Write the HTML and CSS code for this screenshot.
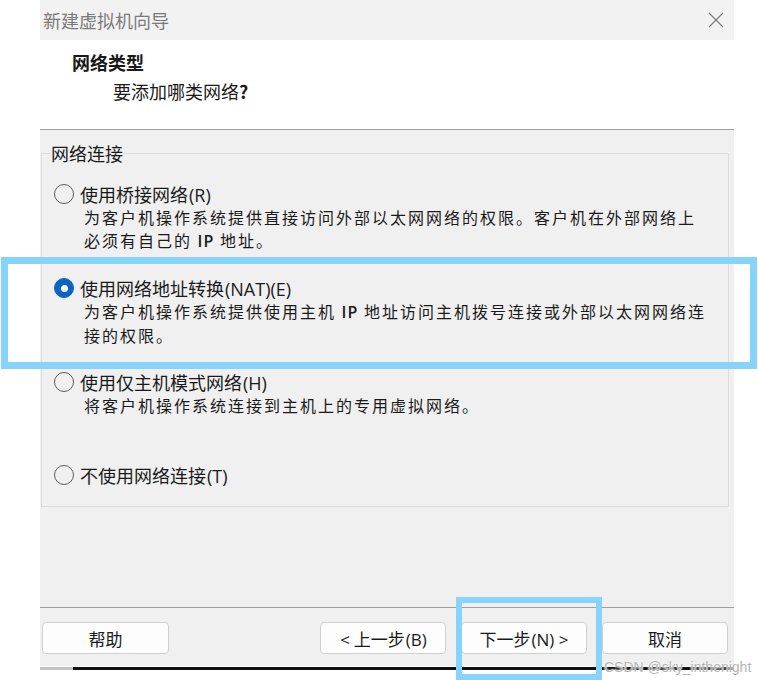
FILE: index.html
```html
<!DOCTYPE html>
<html lang="zh-CN">
<head>
    <meta charset="UTF-8">
    <meta name="viewport" content="width=device-width, initial-scale=1.0">
    <title>新建虚拟机向导</title>
    <link rel="stylesheet" href="styles.css">
</head>
<body>
    <div class="dialog">
        <div class="titlebar">
            <span class="title">新建虚拟机向导</span>
            <svg class="close" width="16" height="16" viewBox="0 0 16 16">
                <path d="M1 1 L15 15 M15 1 L1 15" stroke="#7a7a7a" stroke-width="1.1" fill="none"/>
            </svg>
        </div>

        <div class="header">
            <h1>网络类型</h1>
            <p>要添加哪类网络<b>?</b></p>
        </div>

        <div class="content">
            <fieldset class="group">
                <legend>网络连接</legend>

                <div class="option">
                    <label class="option-label"><span class="radio"></span><span>使用桥接网络<span class="key">(R)</span></span></label>
                    <div class="option-desc">为客户机操作系统提供直接访问外部以太网网络的权限。客户机在外部网络上<br>必须有自己的 <b>IP</b> 地址。</div>
                </div>

                <div class="option">
                    <label class="option-label"><span class="radio checked"></span><span>使用网络地址转换<span class="key">(NAT)(E)</span></span></label>
                    <div class="option-desc">为客户机操作系统提供使用主机 <b>IP</b> 地址访问主机拨号连接或外部以太网网络连<br>接的权限。</div>
                </div>

                <div class="option">
                    <label class="option-label"><span class="radio"></span><span>使用仅主机模式网络<span class="key">(H)</span></span></label>
                    <div class="option-desc">将客户机操作系统连接到主机上的专用虚拟网络。</div>
                </div>

                <div class="option">
                    <label class="option-label"><span class="radio"></span><span>不使用网络连接<span class="key">(T)</span></span></label>
                </div>
            </fieldset>
        </div>

        <div class="footer">
            <button class="btn">帮助</button>
            <div class="nav-buttons">
                <button class="btn"><span class="key">&lt;</span> 上一步<span class="key">(B)</span></button>
                <button class="btn">下一步<span class="key">(N) &gt;</span></button>
                <button class="btn">取消</button>
            </div>
        </div>
    </div>
    <div class="taskline"></div>

    <!-- 标注框 -->
    <div class="mark mark-nat"></div>
    <div class="mark mark-next"></div>
    <div class="watermark">CSDN @sky_inthenight</div>
</body>
</html>
```

FILE: styles.css
```css
body {
    margin: 0;
    background-color: #fff;
    font-family: "Noto Sans CJK SC", sans-serif;
    color: #1a1a1a;
}
.dialog {
    width: 694px;
    margin-left: 40px;
}
.titlebar {
    height: 40px;
    box-sizing: border-box;
    background-color: #f2f2f2;
    display: flex;
    align-items: center;
    justify-content: space-between;
    padding: 0 10px 0 3px;
}
.title {
    font-size: 18px;
    line-height: 24px;
    color: #7a7a7a;
}
.header {
    height: 90px;
    box-sizing: border-box;
    background-color: #fff;
    border-bottom: 1px solid #a0a0a0;
    padding: 10px 0 0 32px;
}
.header h1 {
    margin: 0;
    font-size: 18px;
    line-height: 24px;
    font-weight: bold;
}
.header p {
    margin: 5px 0 0 41px;
    font-size: 18px;
    line-height: 24px;
}
.content {
    height: 478px;
    box-sizing: border-box;
    background-color: #f0f0f0;
    border-bottom: 1px solid #a0a0a0;
    padding-top: 13px;
}
.group {
    margin: 0 5px 0 1px;
    padding: 19px 12px 19px;
    border: 1px solid #dcdcdc;
}
.group legend {
    font-size: 18px;
    line-height: 20px;
    padding: 0 1px;
    margin-left: -4px;
}
.option + .option {
    margin-top: 23px;
}
.option-label {
    display: flex;
    align-items: center;
    gap: 6px;
    height: 24px;
    font-size: 18px;
    line-height: 24px;
}
.key {
    font-family: "Open Sans", sans-serif;
    font-weight: 500;
    line-height: 1;
    margin-left: 1px;
}
.radio {
    width: 18px;
    height: 18px;
    border: 1px solid #5c5c5c;
    border-radius: 50%;
    display: flex;
    align-items: center;
    justify-content: center;
}
.radio.checked {
    background-color: #0a64c2;
    border-color: #0a64c2;
}
.radio.checked::after {
    content: '';
    width: 7px;
    height: 7px;
    border-radius: 50%;
    background-color: #fff;
}
.option-desc {
    min-height: 46px;
    padding-left: 30px;
    font-size: 16px;
    line-height: 23px;
    letter-spacing: 2px;
}
.option-desc b {
    font-family: "Open Sans", sans-serif;
    font-weight: 600;
    letter-spacing: 1px;
}
.footer {
    height: 58px;
    box-sizing: border-box;
    background-color: #f0f0f0;
    display: flex;
    align-items: flex-start;
    padding: 14px 6px 0 2px;
}
.btn {
    width: 127px;
    height: 32px;
    padding: 0;
    background-color: #fdfdfd;
    border: 1px solid #d0d0d0;
    border-radius: 4px;
    font-family: inherit;
    font-size: 17px;
    color: #1a1a1a;
}
.nav-buttons {
    margin-left: auto;
    display: flex;
    gap: 15px;
}
.nav-buttons .btn {
    width: 126px;
}
.taskline {
    width: 694px;
    height: 3px;
    margin: 1px 0 0 40px;
    background: linear-gradient(to right, #c4c4c4 33px, #111 33px);
}
.mark {
    position: absolute;
    box-sizing: border-box;
    border: 7px solid #86d4fc;
}
.mark-nat {
    left: 1px;
    top: 257px;
    width: 756px;
    height: 112px;
}
.mark-next {
    left: 456px;
    top: 597px;
    width: 146px;
    height: 83px;
    border-width: 6px;
}
.watermark {
    position: absolute;
    left: 604px;
    top: 658px;
    font-family: "Liberation Sans", sans-serif;
    font-size: 14px;
    line-height: 18px;
    color: #b4b4b4;
    text-shadow: 0 0 2px #fff, 0 0 2px #fff;
}
```
